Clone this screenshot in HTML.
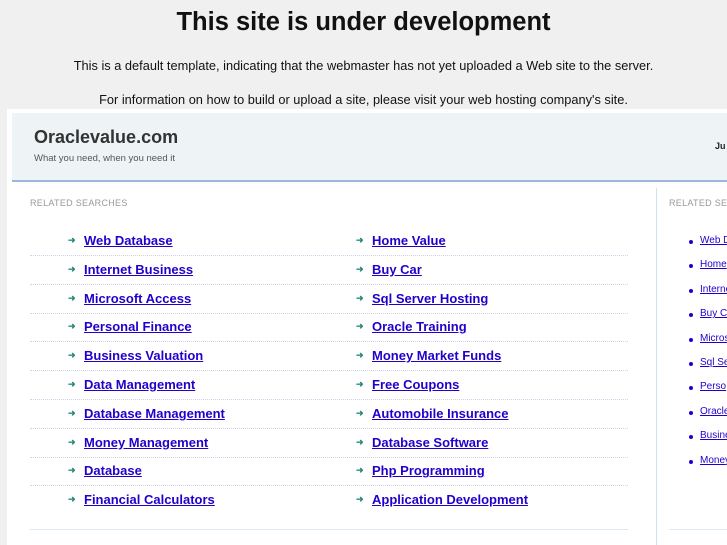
<!DOCTYPE html>
<html><head><style>
html,body{margin:0;width:727px;height:545px;overflow:hidden}
body{background:#f0f0f0;font-family:"Liberation Sans",sans-serif;position:relative}
.a{position:absolute;white-space:nowrap}
h1{position:absolute;top:8px;left:0;width:727px;text-align:center;margin:0;font-size:25.5px;font-weight:bold;color:#111}
.p{left:0;width:727px;text-align:center;font-size:12.8px;color:#111}
.frame{position:absolute;left:7px;top:109px;width:720px;height:436px;background:#fff}
.hdr{position:absolute;left:12px;top:113px;width:715px;height:67px;background:#eef4f6;border-bottom:2px solid #9bb8dc}
.l{font-size:13px;font-weight:bold;color:#2200cc;text-decoration:underline}
.ar{font-size:9px;font-weight:bold;color:#2a8a7a}
.dot{position:absolute;left:30px;width:598px;border-top:1px dotted #c8d8ec}
.s{font-size:10px;color:#2200cc;text-decoration:underline}
.b{position:absolute;width:4px;height:4px;border-radius:2px;background:#2200cc}
</style></head><body>
<h1>This site is under development</h1>
<div class="a p" style="top:58px">This is a default template, indicating that the webmaster has not yet uploaded a Web site to the server.</div>
<div class="a p" style="top:92px">For information on how to build or upload a site, please visit your web hosting company's site.</div>
<div class="frame"></div>
<div class="hdr"></div>
<div class="a" style="left:34px;top:127px;font-size:18px;font-weight:bold;color:#333">Oraclevalue.com</div>
<div class="a" style="left:34px;top:153px;font-size:9.5px;color:#555">What you need, when you need it</div>
<div class="a" style="left:715px;top:141px;font-size:9px;font-weight:bold;color:#222">Ju</div>
<div class="a" style="left:30px;top:198px;font-size:9px;color:#999;letter-spacing:.3px">RELATED SEARCHES</div>
<div class="a" style="left:669px;top:198px;font-size:9px;color:#999;letter-spacing:.3px">RELATED SE</div>
<div style="position:absolute;left:656px;top:188px;width:1px;height:357px;background:#d0e0f0"></div>
<div style="position:absolute;left:30px;top:529px;width:598px;height:1px;background:#dde8f2"></div>
<div style="position:absolute;left:669px;top:529px;width:58px;height:1px;background:#dde8f2"></div>
<div id="rows"></div>
<script>
var L=["Web Database","Internet Business","Microsoft Access","Personal Finance","Business Valuation","Data Management","Database Management","Money Management","Database","Financial Calculators"];
var R=["Home Value","Buy Car","Sql Server Hosting","Oracle Training","Money Market Funds","Free Coupons","Automobile Insurance","Database Software","Php Programming","Application Development"];
var S=["Web D","Home","Interne","Buy C","Micros","Sql Se","Perso","Oracle","Busine","Money"];
var h="";
for(var i=0;i<10;i++){var y=233+i*28.8;
h+='<div class="a ar" style="left:68px;top:'+(y+2)+'px">&#10140;</div><div class="a l" style="left:84px;top:'+y+'px">'+L[i]+'</div>';
h+='<div class="a ar" style="left:356px;top:'+(y+2)+'px">&#10140;</div><div class="a l" style="left:372px;top:'+y+'px">'+R[i]+'</div>';
if(i<9)h+='<div class="dot" style="top:'+(y+22)+'px"></div>';
var z=235+i*24.4;
h+='<div class="b" style="left:689px;top:'+(z+5)+'px"></div><div class="a s" style="left:700px;top:'+z+'px">'+S[i]+'</div>';}
document.getElementById("rows").innerHTML=h;
</script>
</body></html>
